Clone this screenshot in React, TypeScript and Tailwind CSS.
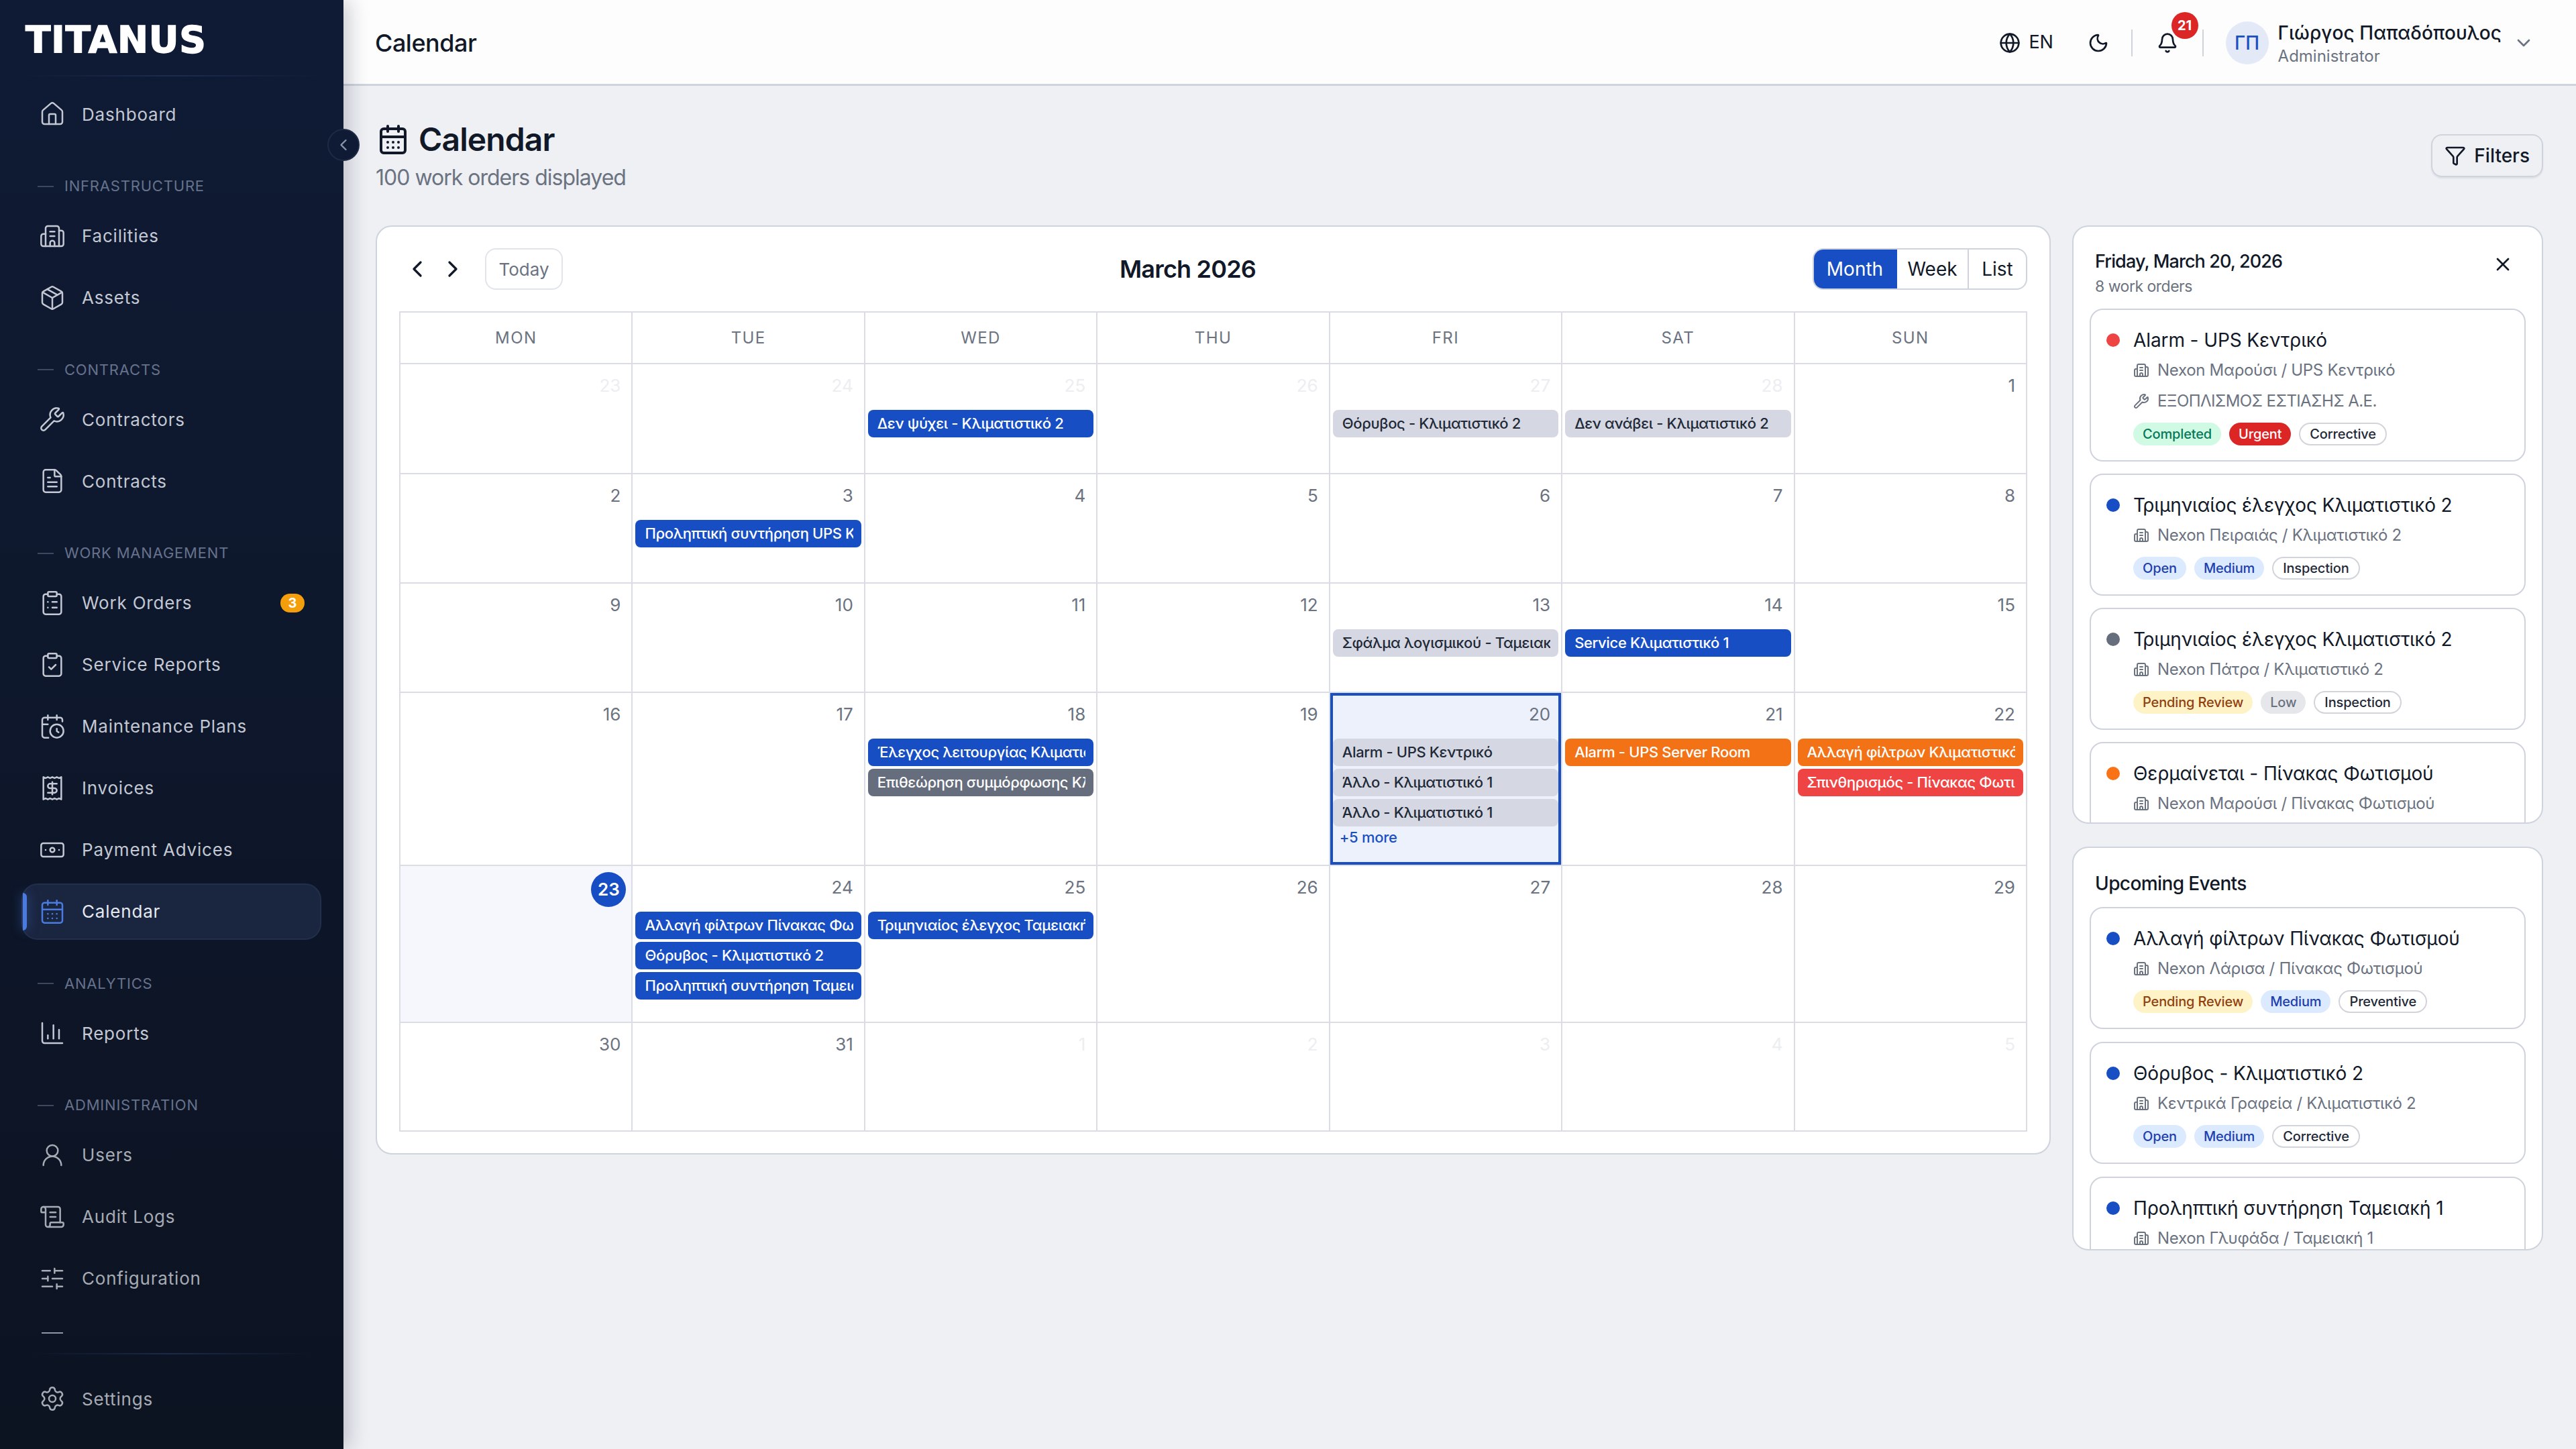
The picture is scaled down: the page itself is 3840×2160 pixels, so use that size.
import {
  Banknote,
  Bell,
  Building2,
  CalendarClock,
  CalendarDays,
  ChartColumn,
  ChevronDown,
  ChevronLeft,
  ChevronRight,
  ClipboardCheck,
  ClipboardList,
  FileText,
  Funnel,
  Globe,
  House,
  Moon,
  Package,
  Receipt,
  ScrollText,
  Settings,
  SlidersHorizontal,
  UserRound,
  Wrench,
  X,
} from 'lucide-react';
import type { LucideIcon } from 'lucide-react';

type NavItem = { name: string; icon: LucideIcon; badge?: string; active?: boolean };

const navSections: { label?: string; dim?: boolean; items: NavItem[] }[] = [
  { items: [{ name: 'Dashboard', icon: House }] },
  {
    label: 'Infrastructure',
    items: [
      { name: 'Facilities', icon: Building2 },
      { name: 'Assets', icon: Package },
    ],
  },
  {
    label: 'Contracts',
    items: [
      { name: 'Contractors', icon: Wrench },
      { name: 'Contracts', icon: FileText },
    ],
  },
  {
    label: 'Work Management',
    items: [
      { name: 'Work Orders', icon: ClipboardList, badge: '3' },
      { name: 'Service Reports', icon: ClipboardCheck },
      { name: 'Maintenance Plans', icon: CalendarClock },
      { name: 'Invoices', icon: Receipt },
      { name: 'Payment Advices', icon: Banknote },
      { name: 'Calendar', icon: CalendarDays, active: true },
    ],
  },
  { label: 'Analytics', items: [{ name: 'Reports', icon: ChartColumn }] },
  {
    label: 'Administration',
    dim: true,
    items: [
      { name: 'Users', icon: UserRound },
      { name: 'Audit Logs', icon: ScrollText },
      { name: 'Configuration', icon: SlidersHorizontal },
    ],
  },
];

const SideLink = ({ item, dim }: { item: NavItem; dim?: boolean }) => {
  const tone = item.active ? 'text-[#e6e9f0]' : dim ? 'text-[#a7abb4]' : 'text-[#c3c8d3]';
  return (
    <div
      className={`relative mx-[32px] flex h-[84px] w-[447px] items-center gap-[24px] rounded-[24px] border-2 pl-[24px] pr-[23px] ${
        item.active ? 'border-[#222e4a] bg-[#1a2540]' : 'border-transparent'
      } ${tone}`}
    >
      {item.active && (
        <span className="absolute left-0 top-[12px] h-[56px] w-[6px] rounded-r-[6px] bg-[#4a7bdf] shadow-[0_0_16px_rgba(74,123,223,0.6)]" />
      )}
      <item.icon size={40} strokeWidth={1.5} className={item.active ? 'text-[#4a7bdf]' : ''} />
      <span className="flex-1 text-[26px] tracking-[0.8px]">{item.name}</span>
      {item.badge && (
        <span className="flex h-[28px] w-[36px] items-center justify-center rounded-full bg-[#f59e0b] text-[20px] font-bold text-white">
          {item.badge}
        </span>
      )}
    </div>
  );
};

const Sidebar = () => (
  <aside className="relative z-10 flex h-full w-[512px] shrink-0 flex-col bg-gradient-to-b from-[#0f1b35] to-[#0c1321] shadow-[8px_0_28px_rgba(15,23,42,0.22)]">
    <div className="relative h-[128px] shrink-0">
      <div className="pl-[38px] pt-[26px] text-[55px] font-bold leading-[66px] tracking-[0.8px] text-white [-webkit-text-stroke:1.5px_white] [font-family:'DejaVu_Sans',sans-serif]">
        TITANUS
      </div>
      <div className="absolute left-[32px] right-[32px] top-[112px] h-[2px] bg-gradient-to-r from-transparent via-[#1d2c4e] to-transparent" />
    </div>
    <button className="absolute -right-[24px] top-[192px] flex h-[48px] w-[48px] items-center justify-center rounded-full border-2 border-[#1e2a45] bg-[#0f1b35] text-[#8a93a8]">
      <ChevronLeft size={28} strokeWidth={2} />
    </button>
    <nav className="flex-1">
      {navSections.map((section, i) => (
        <div key={i} className={section.label ? 'mt-[49.5px]' : ''}>
          {section.label && (
            <div className="mb-[16px] flex h-[32px] items-center gap-[16px] pl-[56px]">
              <span className="h-[2px] w-[24px] bg-[#3c4760]" />
              <span className="text-[22px] uppercase tracking-[0.8px] text-[#66728c]">{section.label}</span>
            </div>
          )}
          <div className="flex flex-col gap-[8px]">
            {section.items.map((item) => (
              <SideLink key={item.name} item={item} dim={section.dim} />
            ))}
          </div>
        </div>
      ))}
      <div className="ml-[62px] mt-[38px] h-[2px] w-[32px] bg-[#8f96a6]" />
    </nav>
    <div className="mx-[48px] h-[2px] bg-gradient-to-r from-transparent via-[#1b2a4a] to-transparent" />
    <div className="pb-[33px] pt-[24px]">
      <SideLink item={{ name: 'Settings', icon: Settings }} dim />
    </div>
  </aside>
);

const Topbar = () => (
  <header className="flex h-[128px] shrink-0 items-center border-b-[3px] border-[#cfd3de] bg-[#fdfdfe] pl-[47px] pr-[62px] pt-[2px]">
    <h1 className="flex-1 text-[36px] font-medium tracking-[-0.5px] text-[#111827]">Calendar</h1>
    <div className="flex items-center gap-[12px] text-[#111827]">
      <Globe size={32} strokeWidth={2} />
      <span className="text-[27px] tracking-[-0.2px]">EN</span>
    </div>
    <Moon size={32} strokeWidth={2} className="ml-[51px] text-[#111827]" />
    <span className="ml-[33px] h-[40px] w-[2px] bg-[#cfd3de]" />
    <div className="relative ml-[36px]">
      <Bell size={32} strokeWidth={2} className="text-[#111827]" />
      <span className="absolute -top-[30px] left-[22px] flex h-[40px] w-[40px] items-center justify-center rounded-full bg-[#dc2626] text-[20px] font-bold text-white">
        21
      </span>
    </div>
    <span className="ml-[36px] h-[40px] w-[2px] bg-[#cfd3de]" />
    <div className="ml-[33px] flex h-[64px] w-[64px] items-center justify-center rounded-full bg-[#e3e9f7] text-[28px] font-medium text-[#1a4fc4]">
      ΓΠ
    </div>
    <div className="ml-[14px] mt-[2px] flex flex-col">
      <span className="text-[28px] font-medium leading-[36px] tracking-[0.1px] text-[#111827]">Γιώργος Παπαδόπουλος</span>
      <span className="mt-[2px] text-[24px] leading-[30px] text-[#6b7280]">Administrator</span>
    </div>
    <ChevronDown size={32} strokeWidth={2} className="ml-[17px] text-[#6b7280]" />
  </header>
);

type CalEvent = { title: string; kind: 'blue' | 'gray' | 'slate' | 'orange' | 'red' };

const eventStyles: Record<CalEvent['kind'], string> = {
  blue: 'bg-[#174ec4] text-white',
  gray: 'bg-[#d5d8e2] text-[#1f2937]',
  slate: 'bg-[#666d7d] text-white',
  orange: 'bg-[#f47216] text-white',
  red: 'bg-[#ef4444] text-white',
};

type Day = { n: number; out?: boolean; today?: boolean; selected?: boolean; more?: string; events?: CalEvent[] };

const days: Day[] = [
  { n: 23, out: true },
  { n: 24, out: true },
  { n: 25, out: true, events: [{ title: 'Δεν ψύχει - Κλιματιστικό 2', kind: 'blue' }] },
  { n: 26, out: true },
  { n: 27, out: true, events: [{ title: 'Θόρυβος - Κλιματιστικό 2', kind: 'gray' }] },
  { n: 28, out: true, events: [{ title: 'Δεν ανάβει - Κλιματιστικό 2', kind: 'gray' }] },
  { n: 1 },
  { n: 2 },
  { n: 3, events: [{ title: 'Προληπτική συντήρηση UPS Κεντρικό', kind: 'blue' }] },
  { n: 4 },
  { n: 5 },
  { n: 6 },
  { n: 7 },
  { n: 8 },
  { n: 9 },
  { n: 10 },
  { n: 11 },
  { n: 12 },
  { n: 13, events: [{ title: 'Σφάλμα λογισμικού - Ταμειακή 1', kind: 'gray' }] },
  { n: 14, events: [{ title: 'Service Κλιματιστικό 1', kind: 'blue' }] },
  { n: 15 },
  { n: 16 },
  { n: 17 },
  {
    n: 18,
    events: [
      { title: 'Έλεγχος λειτουργίας Κλιματιστικό 1', kind: 'blue' },
      { title: 'Επιθεώρηση συμμόρφωσης Κλιματιστικό', kind: 'slate' },
    ],
  },
  { n: 19 },
  {
    n: 20,
    selected: true,
    more: '+5 more',
    events: [
      { title: 'Alarm - UPS Κεντρικό', kind: 'gray' },
      { title: 'Άλλο - Κλιματιστικό 1', kind: 'gray' },
      { title: 'Άλλο - Κλιματιστικό 1', kind: 'gray' },
    ],
  },
  { n: 21, events: [{ title: 'Alarm - UPS Server Room', kind: 'orange' }] },
  {
    n: 22,
    events: [
      { title: 'Αλλαγή φίλτρων Κλιματιστικό 1', kind: 'orange' },
      { title: 'Σπινθηρισμός - Πίνακας Φωτισμού', kind: 'red' },
    ],
  },
  { n: 23, today: true },
  {
    n: 24,
    events: [
      { title: 'Αλλαγή φίλτρων Πίνακας Φωτισμού', kind: 'blue' },
      { title: 'Θόρυβος - Κλιματιστικό 2', kind: 'blue' },
      { title: 'Προληπτική συντήρηση Ταμειακή 1', kind: 'blue' },
    ],
  },
  { n: 25, events: [{ title: 'Τριμηνιαίος έλεγχος Ταμειακή 1', kind: 'blue' }] },
  { n: 26 },
  { n: 27 },
  { n: 28 },
  { n: 29 },
  { n: 30 },
  { n: 31 },
  { n: 1, out: true },
  { n: 2, out: true },
  { n: 3, out: true },
  { n: 4, out: true },
  { n: 5, out: true },
];

const DayCell = ({ day }: { day: Day }) => (
  <div
    className={`min-w-0 border-b-2 border-r-2 border-[#dadde6] px-[4px] pt-[12px] ${
      day.selected ? 'bg-[#ecf1fb] shadow-[inset_0_0_0_4px_#1a4fc4]' : day.today ? 'bg-[#f6f7fd]' : ''
    }`}
  >
    <div className="flex h-[40px] items-center justify-end pr-[12px] text-[26px] leading-[40px]">
      {day.today ? (
        <span className="relative -mr-[8px] top-[3px] flex h-[52px] w-[52px] items-center justify-center rounded-full bg-[#174ec4] font-semibold text-white">
          {day.n}
        </span>
      ) : (
        <span className={day.out ? 'text-[#eceef1]' : 'text-[#6b7280]'}>{day.n}</span>
      )}
    </div>
    {day.events && (
      <div className="mt-[16px] flex flex-col gap-[4px]">
        {day.events.map((ev, i) => (
          <div key={i} className={`h-[41px] rounded-[8px] pl-[14px] pr-[12px] ${eventStyles[ev.kind]}`}>
            <div className="overflow-hidden whitespace-nowrap text-[22px] font-medium leading-[41px] tracking-[-0.35px]">{ev.title}</div>
          </div>
        ))}
      </div>
    )}
    {day.more && <div className="mt-[4px] pl-[10px] text-[22px] font-medium leading-[24px] tracking-[-0.3px] text-[#1a4fc4]">{day.more}</div>}
  </div>
);

const CalendarCard = () => (
  <section className="min-w-0 flex-1 rounded-[24px] border-2 border-[#cfd3de] bg-white px-[33px] py-[32px]">
    <div className="mb-[32px] flex h-[62px] items-center justify-between">
      <div className="flex items-center text-[#111827]">
        <button className="flex w-[53px] justify-center">
          <ChevronLeft size={40} strokeWidth={2} />
        </button>
        <button className="flex w-[53px] justify-center">
          <ChevronRight size={40} strokeWidth={2} />
        </button>
        <button className="ml-[22px] h-[62px] w-[116px] rounded-[16px] border-2 border-[#e1e4ea] text-[26px] text-[#6b7280]">Today</button>
      </div>
      <h2 className="text-[36px] font-semibold tracking-[-0.8px] text-[#111827]">March 2026</h2>
      <div className="flex h-[62px] w-[320px] overflow-hidden rounded-[16px] border-2 border-[#cfd3de] text-[28px]">
        <button className="-m-[2px] w-[126px] bg-[#174ec4] text-white">Month</button>
        <button className="w-[109px] border-r-2 border-[#cfd3de] pl-[2px] text-[#111827]">Week</button>
        <button className="flex-1 text-[#111827]">List</button>
      </div>
    </div>
    <div className="grid grid-cols-7 grid-rows-[77px_164px_163px_163px_258px_234px_162px] border-l-2 border-t-2 border-[#dadde6]">
      {['Mon', 'Tue', 'Wed', 'Thu', 'Fri', 'Sat', 'Sun'].map((d) => (
        <div key={d} className="flex items-center justify-center border-b-2 border-r-2 border-[#dadde6] text-[24px] uppercase tracking-[1.4px] text-[#6b7280]">
          {d}
        </div>
      ))}
      {days.map((day, i) => (
        <DayCell key={i} day={day} />
      ))}
    </div>
  </section>
);

type Tag = { text: string; cls: string };

const tagStyles = {
  completed: 'bg-[#d1fae5] text-[#047857]',
  urgent: 'bg-[#dc2626] text-white',
  open: 'bg-[#dbeafe] text-[#1e40af]',
  medium: 'bg-[#dbeafe] text-[#1e40af]',
  pending: 'bg-[#fef3c7] text-[#92400e]',
  low: 'bg-[#e5e7eb] text-[#6b7280]',
  type: 'border-2 border-[#d1d5db] bg-white text-[#1f2937]',
};

type Order = { dot: string; title: string; place: string; contractor?: string; tags: Tag[] };

const dayOrders: Order[] = [
  {
    dot: 'bg-[#ef4444]',
    title: 'Alarm - UPS Κεντρικό',
    place: 'Nexon Μαρούσι / UPS Κεντρικό',
    contractor: 'ΕΞΟΠΛΙΣΜΟΣ ΕΣΤΙΑΣΗΣ Α.Ε.',
    tags: [
      { text: 'Completed', cls: tagStyles.completed },
      { text: 'Urgent', cls: tagStyles.urgent },
      { text: 'Corrective', cls: tagStyles.type },
    ],
  },
  {
    dot: 'bg-[#174ec4]',
    title: 'Τριμηνιαίος έλεγχος Κλιματιστικό 2',
    place: 'Nexon Πειραιάς / Κλιματιστικό 2',
    tags: [
      { text: 'Open', cls: tagStyles.open },
      { text: 'Medium', cls: tagStyles.medium },
      { text: 'Inspection', cls: tagStyles.type },
    ],
  },
  {
    dot: 'bg-[#666d7d]',
    title: 'Τριμηνιαίος έλεγχος Κλιματιστικό 2',
    place: 'Nexon Πάτρα / Κλιματιστικό 2',
    tags: [
      { text: 'Pending Review', cls: tagStyles.pending },
      { text: 'Low', cls: tagStyles.low },
      { text: 'Inspection', cls: tagStyles.type },
    ],
  },
  {
    dot: 'bg-[#f97316]',
    title: 'Θερμαίνεται - Πίνακας Φωτισμού',
    place: 'Nexon Μαρούσι / Πίνακας Φωτισμού',
    tags: [],
  },
];

const upcomingOrders: Order[] = [
  {
    dot: 'bg-[#174ec4]',
    title: 'Αλλαγή φίλτρων Πίνακας Φωτισμού',
    place: 'Nexon Λάρισα / Πίνακας Φωτισμού',
    tags: [
      { text: 'Pending Review', cls: tagStyles.pending },
      { text: 'Medium', cls: tagStyles.medium },
      { text: 'Preventive', cls: tagStyles.type },
    ],
  },
  {
    dot: 'bg-[#174ec4]',
    title: 'Θόρυβος - Κλιματιστικό 2',
    place: 'Κεντρικά Γραφεία / Κλιματιστικό 2',
    tags: [
      { text: 'Open', cls: tagStyles.open },
      { text: 'Medium', cls: tagStyles.medium },
      { text: 'Corrective', cls: tagStyles.type },
    ],
  },
  {
    dot: 'bg-[#174ec4]',
    title: 'Προληπτική συντήρηση Ταμειακή 1',
    place: 'Nexon Γλυφάδα / Ταμειακή 1',
    tags: [],
  },
];

const OrderCard = ({ order }: { order: Order }) => (
  <div className="flex shrink-0 gap-[20px] rounded-[20px] border-2 border-[#cfd3de] bg-white pb-[22px] pl-[23px] pr-[20px] pt-[25px]">
    <span className={`mt-[10px] h-[20px] w-[20px] shrink-0 rounded-full ${order.dot}`} />
    <div className="min-w-0 flex-1">
      <div className="text-[28px] leading-[40px] tracking-[-0.1px] text-[#111827]">{order.title}</div>
      <div className="mt-[4px] flex h-[42px] items-center gap-[12px] text-[24px] tracking-[-0.3px] text-[#6b7280]">
        <Building2 size={24} strokeWidth={2} />
        {order.place}
      </div>
      {order.contractor && (
        <div className="mt-[4px] flex h-[42px] items-center gap-[12px] text-[24px] tracking-[-0.6px] text-[#6b7280]">
          <Wrench size={24} strokeWidth={2} />
          {order.contractor}
        </div>
      )}
      {order.tags.length > 0 && (
        <div className="mt-[11px] flex gap-[12px]">
          {order.tags.map((t) => (
            <span key={t.text} className={`flex h-[34px] items-center rounded-full px-[14px] text-[20px] font-medium tracking-[-0.15px] ${t.cls}`}>
              {t.text}
            </span>
          ))}
        </div>
      )}
    </div>
  </div>
);

const SidePanels = () => (
  <div className="flex w-[702px] shrink-0 flex-col gap-[34px]">
    <section className="flex h-[892px] flex-col overflow-hidden rounded-[24px] border-2 border-[#cfd3de] bg-white">
      <div className="flex justify-between pl-[32px] pr-[42px] pt-[32px]">
        <div>
          <div className="text-[27px] font-medium leading-[40px] tracking-[-0.9px] text-[#111827]">Friday, March 20, 2026</div>
          <div className="text-[23px] leading-[35px] tracking-[-0.5px] text-[#6b7280]">8 work orders</div>
        </div>
        <X size={32} strokeWidth={2} className="mt-[8px] text-[#111827]" />
      </div>
      <div className="mt-[15px] flex min-h-0 flex-1 flex-col gap-[18px] overflow-hidden px-[24px]">
        {dayOrders.map((o, i) => (
          <OrderCard key={i} order={o} />
        ))}
      </div>
    </section>
    <section className="flex h-[602px] flex-col overflow-hidden rounded-[24px] border-2 border-[#cfd3de] bg-white">
      <div className="pl-[32px] pt-[33px] text-[28px] font-medium leading-[40px] tracking-[-0.6px] text-[#111827]">Upcoming Events</div>
      <div className="mt-[15px] flex min-h-0 flex-1 flex-col gap-[19px] overflow-hidden px-[24px]">
        {upcomingOrders.map((o, i) => (
          <OrderCard key={i} order={o} />
        ))}
      </div>
    </section>
  </div>
);

export default function App() {
  return (
    <div className="flex h-screen w-screen overflow-hidden bg-[#eef0f4] [font-family:Inter,sans-serif]">
      <Sidebar />
      <div className="flex min-w-0 flex-1 flex-col">
        <Topbar />
        <main className="flex-1 pl-[48px] pr-[49px] pt-[48px]">
          <div className="mb-[48px] flex items-center justify-between">
            <div>
              <div className="flex h-[64px] items-center gap-[14px]">
                <CalendarDays size={48} strokeWidth={2} className="ml-[2px] text-[#111827]" />
                <span className="text-[48px] font-semibold tracking-[-0.9px] text-[#111827]">Calendar</span>
              </div>
              <div className="mt-[2px] text-[32px] leading-[46px] tracking-[-1px] text-[#6b7280]">100 work orders displayed</div>
            </div>
            <button className="flex h-[64px] items-center gap-[12px] rounded-[16px] border-2 border-[#cfd3de] px-[18px] text-[28px] font-medium text-[#111827] shadow-[0_2px_2px_rgba(15,23,42,0.08)]">
              <Funnel size={32} strokeWidth={2} />
              Filters
            </button>
          </div>
          <div className="flex items-start gap-[32px]">
            <CalendarCard />
            <SidePanels />
          </div>
        </main>
      </div>
    </div>
  );
}
